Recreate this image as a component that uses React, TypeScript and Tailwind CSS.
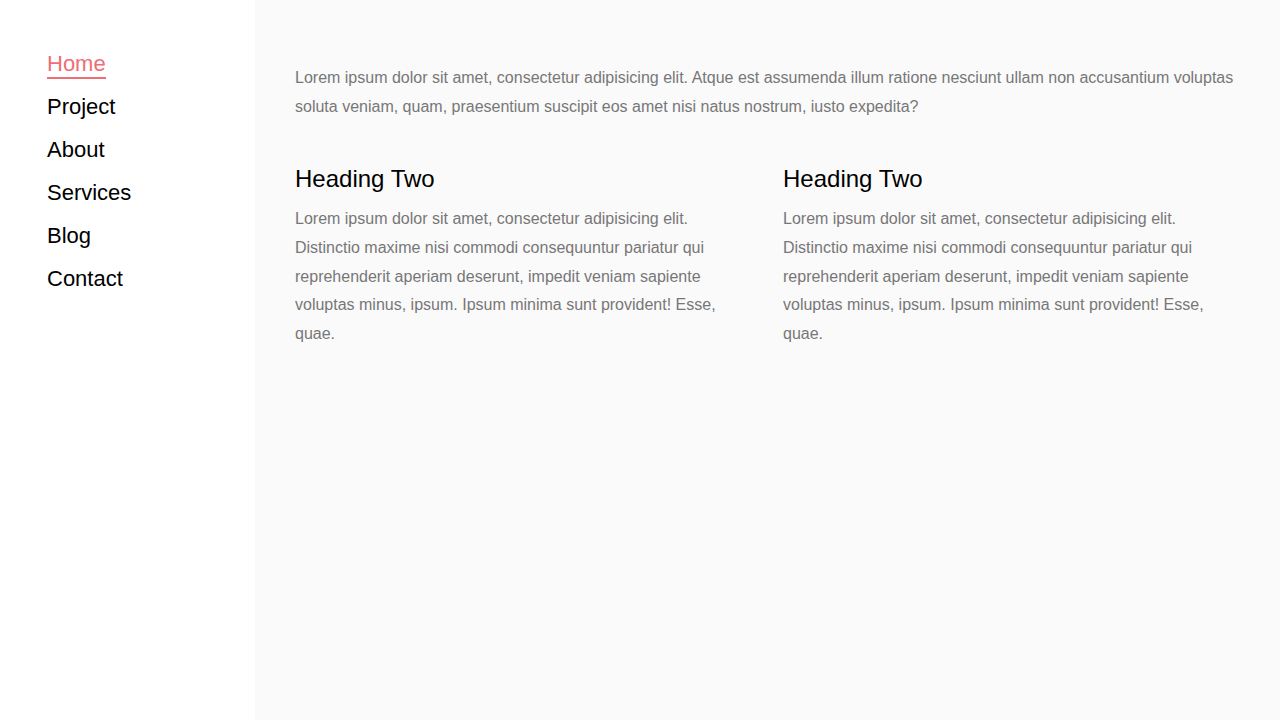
import React from "react";

const navItems = ["Home", "Project", "About", "Services", "Blog", "Contact"];

const body =
  "Lorem ipsum dolor sit amet, consectetur adipisicing elit. Distinctio maxime nisi commodi consequuntur pariatur qui reprehenderit aperiam deserunt, impedit veniam sapiente voluptas minus, ipsum. Ipsum minima sunt provident! Esse, quae.";

export default function App() {
  return (
    <div className="flex min-h-[720px] w-full font-['Liberation_Sans',Arial,sans-serif]">
      <aside className="w-[255px] shrink-0 bg-white pl-[47px] pt-[51px]">
        <nav className="flex flex-col items-start gap-[15px]">
          {navItems.map((item, i) => (
            <a
              key={item}
              href="#"
              className={
                i === 0
                  ? "border-b-2 border-[#ee6e73] text-[22px] leading-[26px] text-[#ee6e73]"
                  : "border-b-2 border-transparent text-[22px] leading-[26px] text-black"
              }
            >
              {item}
            </a>
          ))}
        </nav>
      </aside>

      <main className="flex-1 bg-[#fafafa] px-10 pt-[63px]">
        <p className="text-base leading-[29px] text-[#777]">
          Lorem ipsum dolor sit amet, consectetur adipisicing elit. Atque est assumenda illum ratione nesciunt ullam non
          accusantium voluptas soluta veniam, quam, praesentium suscipit eos amet nisi natus nostrum, iusto expedita?
        </p>

        <div className="mt-[43px] grid grid-cols-2 gap-[31px]">
          {[0, 1].map((col) => (
            <section key={col}>
              <h2 className="text-2xl leading-[29px] text-black">Heading Two</h2>
              <p className="mt-[12px] text-base leading-[28.8px] text-[#777]">{body}</p>
            </section>
          ))}
        </div>
      </main>
    </div>
  );
}
